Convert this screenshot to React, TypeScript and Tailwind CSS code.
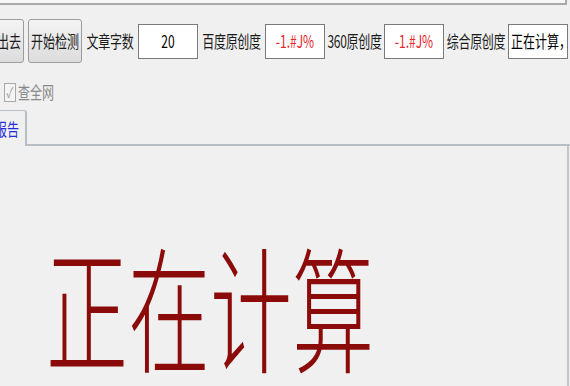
import React from 'react';

const cjk = { fontFamily: '"Noto Sans CJK SC", "Noto Sans", sans-serif' };

interface FieldProps {
  value: string;
  tone?: 'red' | 'black';
  align?: 'center' | 'left';
  width: string;
}

function Field({ value, tone = 'black', align = 'center', width }: FieldProps) {
  return (
    <div
      className={`${width} h-[35px] bg-white border border-[#7a7a7a] flex items-center overflow-hidden whitespace-nowrap ${
        align === 'center' ? 'justify-center' : 'justify-start pl-[2px]'
      }`}
    >
      <span
        className={`text-[12px] leading-none scale-y-[1.45] ${tone === 'red' ? 'text-[#e8232a]' : 'text-black'}`}
        style={cjk}
      >
        {value}
      </span>
    </div>
  );
}

function Label({ text, width }: { text: string; width: string }) {
  return (
    <div className={`${width} flex items-center justify-center whitespace-nowrap`}>
      <span className="text-[12px] leading-none text-[#1a1a1a] scale-y-[1.45] tracking-[-0.3px]" style={cjk}>
        {text}
      </span>
    </div>
  );
}

function WinButton({ text, className }: { text: string; className: string }) {
  return (
    <div
      className={`h-[44px] rounded-[3px] border border-[#9c9c9c] bg-gradient-to-b from-[#f4f4f4] to-[#dcdcdc] flex items-center justify-center whitespace-nowrap ${className}`}
    >
      <span className="text-[12px] leading-none text-[#1a1a1a] scale-y-[1.45]" style={cjk}>
        {text}
      </span>
    </div>
  );
}

export default function App() {
  return (
    <div className="w-[570px] h-[386px] bg-[#f0f0f0] overflow-hidden flex flex-col" style={cjk}>
      {/* bottom edge of the url box above */}
      <div className="w-[567px] h-[5px] bg-[#f7f7f7] border-b-2 border-r-2 border-[#a9a9a9]" />

      {/* toolbar row */}
      <div className="flex items-center mt-[14px] h-[44px]">
        <WinButton text="出去" className="w-[30px] -ml-[6px]" />
        <WinButton text="开始检测" className="w-[54px] ml-[4px]" />
        <Label text="文章字数" width="w-[56px]" />
        <Field value="20" width="w-[60px]" />
        <Label text="百度原创度" width="w-[67px]" />
        <Field value="-1.#J%" tone="red" width="w-[60px]" />
        <Label text="360原创度" width="w-[59px]" />
        <Field value="-1.#J%" tone="red" width="w-[60px]" />
        <Label text="综合原创度" width="w-[64px]" />
        <Field value="正在计算，请稍候" align="left" width="w-[60px]" />
      </div>

      {/* checkbox */}
      <div className="flex items-center h-[20px] mt-[19px] pl-[4px] gap-[2px]">
        <div className="w-[12px] h-[19px] border border-[#a8a8a8] bg-[#f4f4f4] flex items-center justify-center">
          <span className="text-[10px] leading-none text-[#9a9a9a] scale-y-[1.45]">✓</span>
        </div>
        <span className="text-[12px] leading-none text-[#8a8a8a] scale-y-[1.45]">查全网</span>
      </div>

      {/* tab strip */}
      <div className="flex items-end h-[36px] mt-[8px] border-b-2 border-[#b9bec4]">
        <div className="w-[27px] h-[36px] -mb-[2px] bg-[#f0f0f0] border-r-2 border-t border-[#b9bec4] rounded-tr-[3px] flex items-center justify-end pr-[6px] overflow-hidden whitespace-nowrap">
          <span className="text-[12px] leading-none text-[#1f2bd6] scale-y-[1.45]">报告</span>
        </div>
      </div>

      {/* tab panel */}
      <div className="w-[569px] flex-1 border-r-2 border-[#c3c7cc] flex items-start pt-[118px] pl-[46px]">
        <span
          className="text-[82px] leading-none text-[#8b0a0a] font-light scale-y-[1.66] origin-center"
          style={{ fontFamily: '"Noto Sans CJK SC", serif' }}
        >
          正在计算
        </span>
      </div>
    </div>
  );
}
